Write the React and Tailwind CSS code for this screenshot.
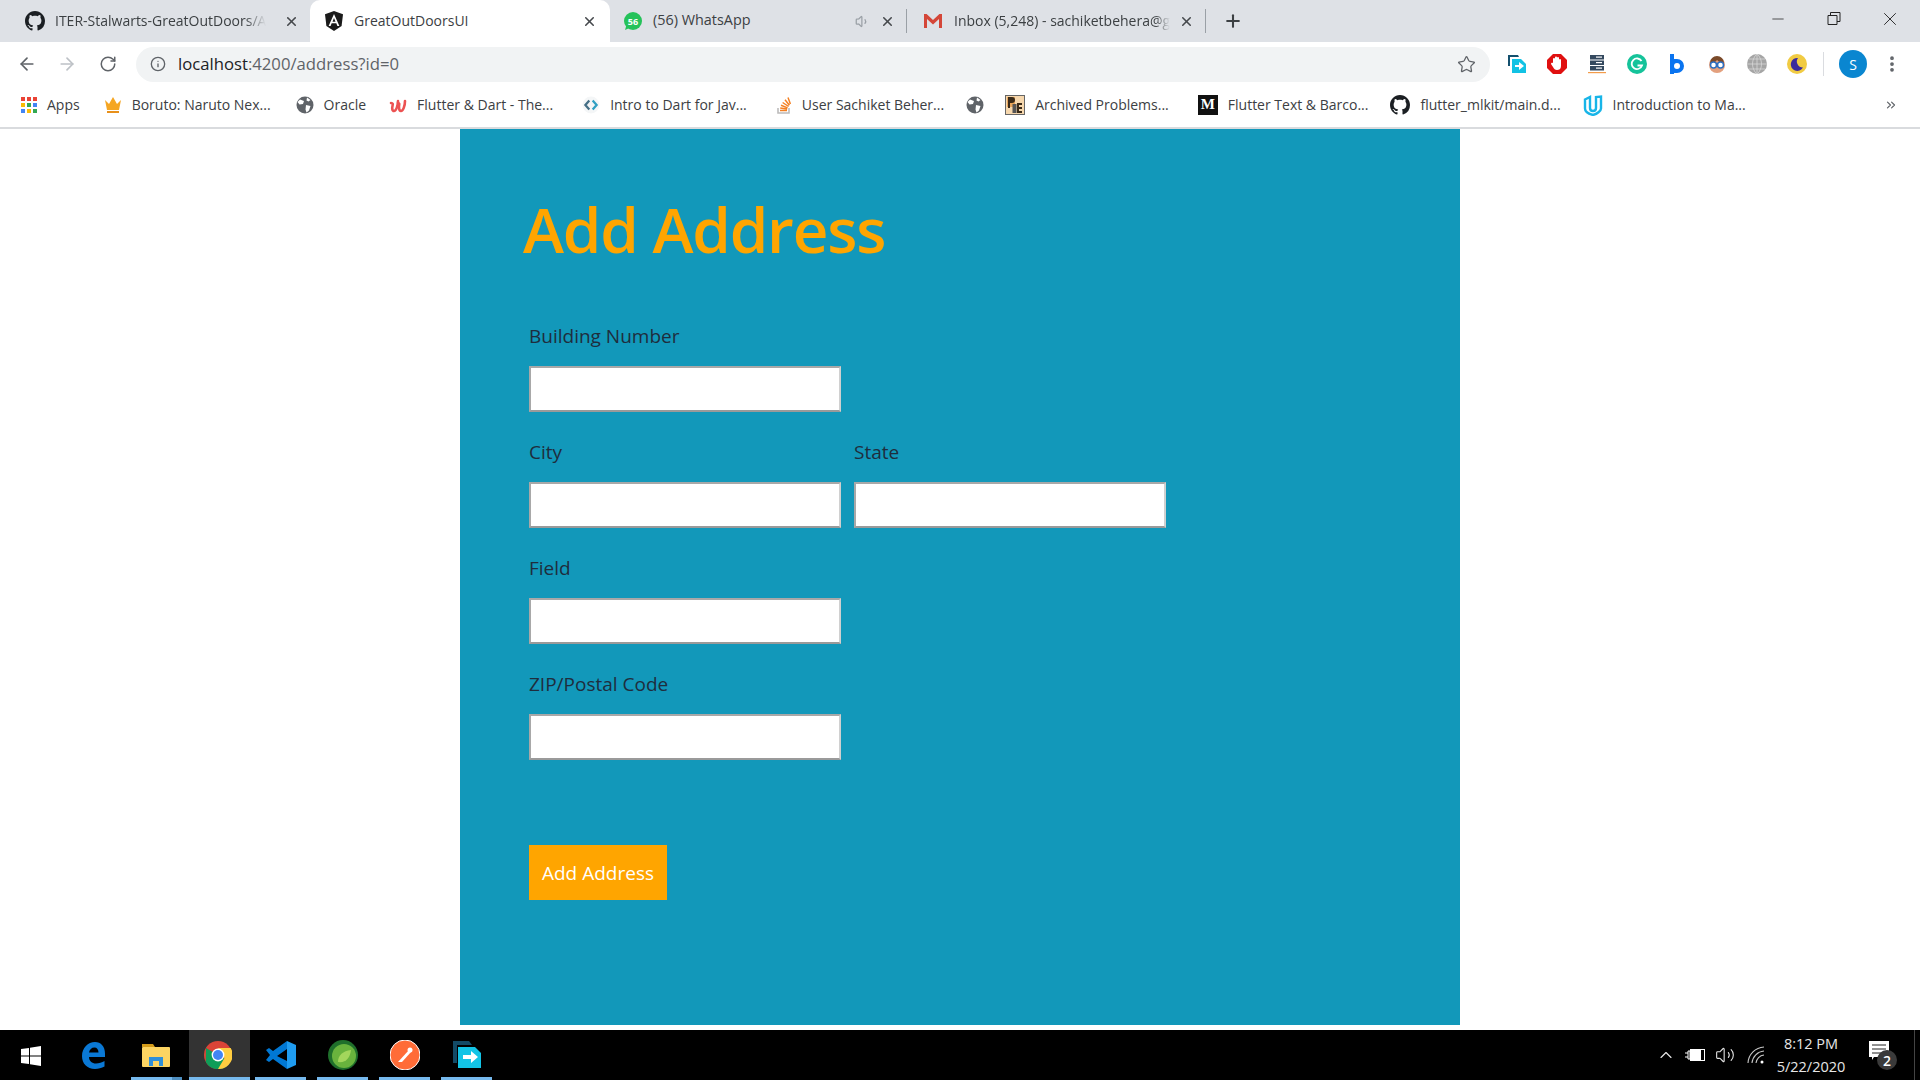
import {
  ArrowLeft,
  ArrowRight,
  RotateCw,
  Info,
  Star,
  Plus,
  X,
  Minus,
  Volume1,
  ChevronUp,
  MoreVertical,
  ChevronsRight,
  Volume2,
} from 'lucide-react'

const uiFont = 'font-["Open_Sans",sans-serif]'

const GithubIcon = ({ size = 20 }) => (
  <svg width={size} height={size} viewBox="0 0 16 16" fill="#1b1f23">
    <path d="M8 0C3.58 0 0 3.58 0 8c0 3.54 2.29 6.53 5.47 7.59.4.07.55-.17.55-.38 0-.19-.01-.82-.01-1.49-2.01.37-2.53-.49-2.69-.94-.09-.23-.48-.94-.82-1.13-.28-.15-.68-.52-.01-.53.63-.01 1.08.58 1.23.82.72 1.21 1.87.87 2.33.66.07-.52.28-.87.51-1.07-1.78-.2-3.64-.89-3.64-3.95 0-.87.31-1.59.82-2.15-.08-.2-.36-1.02.08-2.12 0 0 .67-.21 2.2.82.64-.18 1.32-.27 2-.27s1.36.09 2 .27c1.53-1.04 2.2-.82 2.2-.82.44 1.1.16 1.92.08 2.12.51.56.82 1.27.82 2.15 0 3.07-1.87 3.75-3.65 3.95.29.25.54.73.54 1.48 0 1.07-.01 1.93-.01 2.2 0 .21.15.46.55.38A8.01 8.01 0 0 0 16 8c0-4.42-3.58-8-8-8z" />
  </svg>
)

const AngularIcon = () => (
  <svg width="20" height="20" viewBox="0 0 20 20">
    <path d="M10 0 1 3.2l1.4 11.9L10 20l7.6-4.9L19 3.2z" fill="#1a1a1a" />
    <path d="M10 3 4.6 15h2l1.1-2.7h4.6l1.1 2.7h2zm-1.5 7.7L10 7l1.5 3.7z" fill="#fff" />
  </svg>
)

const WhatsappIcon = () => (
  <svg width="20" height="20" viewBox="0 0 20 20">
    <circle cx="10" cy="10" r="9" fill="#25c25a" />
    <path d="M2 19l1.5-5 3 3z" fill="#25c25a" />
    <text x="10" y="13.5" textAnchor="middle" fontSize="9" fontWeight="700" fill="#fff" fontFamily="Open Sans">56</text>
  </svg>
)

const GmailIcon = () => (
  <svg width="20" height="16" viewBox="0 0 20 16">
    <path d="M1 1h2.6L10 7l6.4-6H19v14h-3V6l-6 5.4L4 6v9H1z" fill="#d44638" />
  </svg>
)

const Bookmark = ({ icon, label, className = '' }) => (
  <div className={`flex items-center gap-[10px] shrink-0 ${className}`}>
    {icon}
    {label ? <span className="whitespace-nowrap">{label}</span> : null}
  </div>
)

const GlobeIcon = ({ color = '#5f6368' }) => (
  <svg width="18" height="18" viewBox="0 0 18 18">
    <circle cx="9" cy="9" r="8.5" fill={color} />
    <path d="M4 3.5 8 5 7 8 3.5 8.5 1.5 6zM10 9l4.5 1-1.5 4.5-2.5 2-1-3zM11 1.5l3.5 2.5-2 1.5-2-1z" fill="#fff" />
  </svg>
)

const AppsIcon = () => {
  const colors = ['#ea4335', '#ea4335', '#ea4335', '#fbbc05', '#34a853', '#4285f4', '#4285f4', '#fbbc05', '#34a853']
  return (
    <div className="grid grid-cols-3 gap-[2px] w-[16px]">
      {colors.map((c, i) => (
        <div key={i} className="w-[4px] h-[4px]" style={{ backgroundColor: c }} />
      ))}
    </div>
  )
}

const CrownIcon = () => (
  <svg width="18" height="18" viewBox="0 0 18 18">
    <path d="M1 4l4 4 4-7 4 7 4-4-2 10H3z" fill="#f5a623" />
    <rect x="3" y="15" width="12" height="2" fill="#e8901a" />
  </svg>
)

const UdemyLikeIcon = () => (
  <svg width="18" height="16" viewBox="0 0 18 16" fill="none" stroke="#ec5252" strokeWidth="2.6" strokeLinecap="round">
    <path d="M2 6c2 0 2 1 1.5 3S3 14 5 14s4-5 4-10" />
    <path d="M9 6c2 0 1 2 1 4s0 4 2 4 4-5 4-10" />
  </svg>
)

const DartIcon = () => (
  <svg width="18" height="18" viewBox="0 0 16 16" fill="none" strokeWidth="2">
    <circle cx="8" cy="8" r="7.5" fill="#f4f6f7" stroke="none" />
    <path d="M6.5 4 3 8l3.5 4" stroke="#456f86" />
    <path d="M9.5 4 13 8l-3.5 4" stroke="#2f9fc2" />
  </svg>
)

const StackIcon = () => (
  <svg width="16" height="20" viewBox="0 0 16 20" fill="none">
    <path d="M2 13v5h11v-5" stroke="#bcbbbb" strokeWidth="1.6" />
    <path d="M4 15.5h7M4.2 13l7 1M5 10.3l6.6 2.6M6.6 7.5l6 4M9 4.8l4.4 5.4M12 2.5l2.4 6.4" stroke="#f48024" strokeWidth="1.5" />
  </svg>
)

const PeIcon = () => (
  <svg width="20" height="20" viewBox="0 0 20 20">
    <rect x=".5" y=".5" width="19" height="19" fill="#f6d7ad" stroke="#666" />
    <rect x="2" y="2" width="8" height="10" fill="#e9a65c" />
    <rect x="7.5" y="9" width="4" height="9" fill="#555" />
    <path d="M3 2h4a3 3 0 0 1 0 6H5v5H3zM12 8h5v2h-3v2h3v2h-3v2h3v2h-5z" fill="#3a2a18" />
  </svg>
)

const MediumIcon = () => (
  <div className="w-[20px] h-[20px] bg-[#111] text-white flex items-center justify-center text-[15px] font-bold font-['Liberation_Serif',serif]">
    M
  </div>
)

const UdacityIcon = () => (
  <svg width="20" height="22" viewBox="0 0 20 22" fill="none" stroke="#18b5e8" strokeWidth="2.4">
    <path d="M2 5.5 7 3v11c0 2 1.5 3 3 3s3-1 3-3V3l5-.5v12c0 2.5-4 5.5-8 6.5-4-1-8-3.5-8-6.5z" />
  </svg>
)

const ExtensionIcons = () => (
  <div className="flex items-center">
    <svg className="w-[20px] h-[20px] mr-[20px]" viewBox="0 0 20 20">
      <path d="M1 1h10l1 2H3v9H1z" fill="#14506e" />
      <path d="M5 5h9l5 5v9H5z" fill="#12c2e4" />
      <path d="M8 11h4V8l5 4-5 4v-3H8z" fill="#fff" />
    </svg>
    <svg className="w-[20px] h-[20px] mr-[20px]" viewBox="0 0 20 20">
      <path d="M6 0h8l6 6v8l-6 6H6l-6-6V6z" fill="#e01010" />
      <path d="M6 9V5a1 1 0 0 1 2 0V3.5a1 1 0 0 1 2 0V4a1 1 0 0 1 2 0v2a1 1 0 0 1 2 0v6c0 3-2 4-4 4s-3-1-4-3L4 10c0-1 1-1.500 2-1z" fill="#fff" />
    </svg>
    <svg className="w-[20px] h-[20px] mr-[20px]" viewBox="0 0 20 20">
      <rect x="3" y="1" width="14" height="4.500" fill="#34495e" />
      <rect x="3" y="6.500" width="14" height="4.500" fill="#34495e" />
      <rect x="3" y="12" width="14" height="4.500" fill="#34495e" />
      <rect x="9" y="2.500" width="6" height="1.200" fill="#fff" />
      <rect x="9" y="8" width="6" height="1.200" fill="#fff" />
      <rect x="9" y="13.500" width="6" height="1.200" fill="#fff" />
      <rect x="1" y="18" width="18" height="1.200" fill="#f39c4a" />
    </svg>
    <svg className="w-[20px] h-[20px] mr-[20px]" viewBox="0 0 20 20">
      <circle cx="10" cy="10" r="10" fill="#15c39a" />
      <path d="M14.500 7A5.300 5.300 0 1 0 15 11.500h-4.500" fill="none" stroke="#fff" strokeWidth="1.800" />
    </svg>
    <svg className="w-[20px] h-[20px] mr-[20px]" viewBox="0 0 20 20">
      <path d="M3 0h4v5h3a7 7 0 0 1 0 14H7v1H3z" fill="#0a74f0" />
      <circle cx="10" cy="12" r="3" fill="#fff" />
    </svg>
    <svg className="w-[20px] h-[20px] mr-[20px]" viewBox="0 0 20 20">
      <circle cx="10" cy="11" r="8" fill="#e3a07e" />
      <path d="M3 9a7 7 0 0 1 14 0c-3 0-5-1-7-3-1 2-4 3-7 3z" fill="#7a4a2a" />
      <circle cx="6.500" cy="11" r="3" fill="#fff" stroke="#2d6fc0" strokeWidth="1.500" />
      <circle cx="13.500" cy="11" r="3" fill="#fff" stroke="#2d6fc0" strokeWidth="1.500" />
    </svg>
    <svg className="w-[20px] h-[20px] mr-[20px]" viewBox="0 0 20 20" fill="none">
      <circle cx="10" cy="10" r="10" fill="#a5a5a5" />
      <path d="M0 10h20M10 0v20M2 5h16M2 15h16M10 0c-6 5-6 15 0 20M10 0c6 5 6 15 0 20" stroke="#d8d8d8" strokeWidth=".8" />
    </svg>
    <svg className="w-[20px] h-[20px]" viewBox="0 0 20 20">
      <circle cx="10" cy="10" r="10" fill="#f1cb43" />
      <path d="M11 4a6.500 6.500 0 1 0 5 9.500A6 6 0 0 1 11 4z" fill="#3b2a9c" />
    </svg>
  </div>
)

const Tabs = () => (
  <div className={`h-[42px] bg-[#dee1e6] flex items-center text-[14px] text-[#3c4043] ${uiFont}`}>
    <div className="w-[310px] h-full flex items-center pl-[25px] pr-[11px]">
      <GithubIcon />
      <span className="ml-[10px] pb-[2px] whitespace-nowrap [mask-image:linear-gradient(to_right,black_90%,transparent)]">ITER-Stalwarts-GreatOutDoors/A</span>
      <X size={15} strokeWidth={2.5} className="ml-auto text-[#45484c]" />
    </div>
    <div className="w-[300px] h-full bg-white rounded-t-[10px] flex items-center pl-[14px] pr-[13px]">
      <AngularIcon />
      <span className="ml-[10px] pb-[2px] whitespace-nowrap">GreatOutDoorsUI</span>
      <X size={15} strokeWidth={2.5} className="ml-auto text-[#45484c]" />
    </div>
    <div className="w-[296px] h-full flex items-center pl-[13px] pr-[11px]">
      <WhatsappIcon />
      <span className="ml-[10px] pb-[2px] whitespace-nowrap text-[14.4px]">(56) WhatsApp</span>
      <Volume1 size={15} className="ml-auto text-[#9aa0a6]" />
      <X size={15} strokeWidth={2.5} className="ml-[10px] text-[#45484c]" />
    </div>
    <div className="w-[300px] h-[24px] flex items-center pl-[16px] pr-[11px] border-x border-[#9aa0a6]">
      <GmailIcon />
      <span className="ml-[11px] pb-[2px] whitespace-nowrap [mask-image:linear-gradient(to_right,black_93%,transparent)]">Inbox (5,248) - sachiketbehera@g</span>
      <X size={15} strokeWidth={2.5} className="ml-auto text-[#45484c]" />
    </div>
    <Plus size={20} strokeWidth={2.5} className="ml-[17px] text-[#3c4043]" />
    <div className="ml-auto flex items-center text-[#222] pb-[5px] pr-[2px]">
      <Minus size={18} strokeWidth={1} className="w-[56px]" />
      <svg className="w-[56px] h-[13px]" viewBox="0 0 13 13" fill="none" stroke="#222">
        <path d="M.5 3.500h9v9h-9zM3 3.500V.500h9.500v9H9.500" />
      </svg>
      <X size={22} strokeWidth={1} className="w-[56px]" />
    </div>
  </div>
)

const Toolbar = () => (
  <div className="h-[42px] bg-white flex items-center pt-[2px]">
    <div className="w-[136px] flex items-center pl-[17px] text-[#5f6368]">
      <ArrowLeft size={20} strokeWidth={2} />
      <ArrowRight size={20} strokeWidth={2} className="ml-[20px] text-[#bdc1c6]" />
      <RotateCw size={18} strokeWidth={2} className="ml-[22px]" />
    </div>
    <div className={`w-[1354px] h-[35px] rounded-full bg-[#f1f3f4] flex items-center pl-[14px] pr-[14px] text-[16.7px] ${uiFont}`}>
      <Info size={16} strokeWidth={2} className="text-[#5f6368]" />
      <span className="ml-[12px] text-[#202124]">localhost<span className="text-[#5f6368]">:4200/address?id=0</span></span>
      <Star size={19} strokeWidth={1.6} className="ml-auto text-[#5f6368]" />
    </div>
    <div className="ml-[17px] flex items-center">
      <ExtensionIcons />
      <div className="w-px h-[24px] bg-[#dadce0] ml-[16px]" />
      <div className={`ml-[15px] w-[28px] h-[28px] rounded-full bg-[#0a86d0] text-white flex items-center justify-center text-[14px] ${uiFont}`}>S</div>
      <MoreVertical size={20} strokeWidth={2.5} className="ml-[15px] text-[#5f6368]" />
    </div>
  </div>
)

const Bookmarks = () => (
  <div className={`h-[45px] bg-white border-b-2 border-[#d9dbde] flex items-center pl-[20px] pr-[22px] pb-[2px] gap-[22px] text-[14px] text-[#3c4043] ${uiFont}`}>
    <Bookmark icon={<AppsIcon />} label="Apps" className="ml-[1px]" />
    <Bookmark icon={<CrownIcon />} label="Boruto: Naruto Nex..." className="ml-[2px]" />
    <Bookmark icon={<GlobeIcon />} label="Oracle" className="ml-[3px]" />
    <Bookmark icon={<UdemyLikeIcon />} label="Flutter & Dart - The..." className="ml-[1px]" />
    <Bookmark icon={<DartIcon />} label="Intro to Dart for Jav..." className="ml-[7px]" />
    <Bookmark icon={<StackIcon />} label="User Sachiket Beher..." className="ml-[7px]" />
    <Bookmark icon={<GlobeIcon />} />
    <Bookmark icon={<PeIcon />} label="Archived Problems..." className="-ml-[1px]" />
    <Bookmark icon={<MediumIcon />} label="Flutter Text & Barco..." className="ml-[7px]" />
    <Bookmark icon={<GithubIcon />} label="flutter_mlkit/main.d..." />
    <Bookmark icon={<UdacityIcon />} label="Introduction to Ma..." />
    <ChevronsRight size={14} className="ml-auto text-[#5f6368]" />
  </div>
)

const FormField = ({ label }) => (
  <div className="w-[312px]">
    <label className="block h-[30px] leading-[30px] text-[19px] text-[#1f2d3d]">{label}</label>
    <input type="text" className="mt-[15px] block w-full h-[46px] bg-white border-2 border-t-[#a8a8a8] border-l-[#a8a8a8] border-r-[#d0d0d0] border-b-[#9a9a9a]" />
  </div>
)

const AddressForm = () => (
  <div className="w-[1000px] h-[896px] mx-auto bg-[#1298ba] pt-[60px] pl-[69px]">
    <h1 className="-ml-[6px] h-[80px] leading-[80px] text-[62px] tracking-[-1.2px] font-semibold text-[#ffa500]">Add Address</h1>
    <form className="mt-[52px] flex flex-col gap-[25px]">
      <FormField label="Building Number" />
      <div className="flex gap-[13px]">
        <FormField label="City" />
        <FormField label="State" />
      </div>
      <FormField label="Field" />
      <FormField label="ZIP/Postal Code" />
      <button type="button" className="mt-[60px] w-[138px] h-[55px] pt-[1px] bg-[#ffa500] text-white text-[19px]">Add Address</button>
    </form>
  </div>
)

const Taskbar = () => (
  <div className={`h-[50px] bg-black flex items-stretch text-[#e6e6e6] ${uiFont}`}>
    <div className="w-[61px] flex items-center justify-center pt-[1px]">
      <svg width="20" height="20" viewBox="0 0 20 20" fill="#fff">
        <path d="M0 3l8-1v7.500H0zM9 1.800 20 0v9.500H9zM0 10.500h8V18l-8-1zM9 10.500h11V20L9 18.200z" />
      </svg>
    </div>
    <div className="w-[62px] flex items-center justify-center pl-[4px]">
      <svg width="26" height="28" viewBox="0 0 26 28">
        <path d="M24 16H8c0 4 3 6.500 7 6.500 3 0 6-1 8.500-2.500v5.500c-3 1.500-6 2.500-9.500 2.500C6 28 1 22.500 1 15 1 7 7 1 14 1c6 0 10 4.500 10 11.500zM17.500 11.500c0-3-1.500-5-4-5-3 0-5 2-5.500 5z" fill="#0a78d4" />
      </svg>
    </div>
    <div className="w-[66px] flex items-center justify-center relative">
      <svg width="28" height="24" viewBox="0 0 28 24">
        <path d="M0 1h11l2 3H0z" fill="#d49c1a" />
        <rect y="4" width="28" height="20" rx="1" fill="#fcd462" />
        <path d="M7 23v-9h14v9h-4v-5h-6v5z" fill="#2f8fd8" />
      </svg>
      <div className="absolute left-[8px] w-[41px] bottom-0 h-[3px] bg-[#76b9ed]" />
      <div className="absolute left-[49px] w-[10px] bottom-0 h-[3px] bg-[#4f8fc0]" />
    </div>
    <div className="w-[61px] bg-[#333] flex items-center justify-center relative pr-[3px]">
      <svg width="28" height="28" viewBox="0 0 28 28">
        <circle cx="14" cy="14" r="14" fill="#db4437" />
        <path d="M14 14 26.200 21a14 14 0 0 1-24.400 0L2 7z" fill="#0f9d58" />
        <path d="M14 7h12.700A14 14 0 0 1 14 28l6.500-11z" fill="#ffcd40" />
        <circle cx="14" cy="14" r="6.400" fill="#fff" />
        <circle cx="14" cy="14" r="5" fill="#4285f4" />
      </svg>
      <div className="absolute left-0 right-0 bottom-0 h-[3px] bg-[#76b9ed]" />
    </div>
    <div className="w-[62px] flex items-center justify-center relative">
      <svg width="30" height="30" viewBox="0 0 30 30">
        <path d="M21 1 30 5v20l-9 4z" fill="#1f9cf0" />
        <path d="M21 1v8l-10 7 10 5v8L7 19 3 22l-3-2 4-5-4-5 3-2 4 3z" fill="#0078d4" />
      </svg>
      <div className="absolute left-[5px] right-[6px] bottom-0 h-[3px] bg-[#76b9ed]" />
    </div>
    <div className="w-[62px] flex items-center justify-center relative">
      <svg width="30" height="30" viewBox="0 0 30 30">
        <circle cx="15" cy="15" r="15" fill="#1f6f2b" />
        <circle cx="16" cy="16" r="12" fill="#69b33d" />
        <path d="M10 22c0-7 5-11 13-12-1 8-5 13-13 12z" fill="#a3d65c" />
      </svg>
      <div className="absolute left-[5px] right-[6px] bottom-0 h-[3px] bg-[#76b9ed]" />
    </div>
    <div className="w-[62px] flex items-center justify-center relative">
      <svg width="30" height="30" viewBox="0 0 30 30">
        <circle cx="15" cy="15" r="15" fill="#ff6c37" stroke="#fff" strokeWidth="1" />
        <path d="M8 22 19 10l2 2-9 10z" fill="#fff" />
        <circle cx="20" cy="10" r="2.500" fill="#fff" />
      </svg>
      <div className="absolute left-[5px] right-[6px] bottom-0 h-[3px] bg-[#76b9ed]" />
    </div>
    <div className="w-[62px] flex items-center justify-center relative">
      <svg width="30" height="30" viewBox="0 0 30 30">
        <path d="M1 1h16l3 4H5v18H1z" fill="#134a66" />
        <path d="M6 7h17l6 6v15H6z" fill="#13c4e6" />
        <path d="M11 15h8v-4l7 6-7 6v-4h-8z" fill="#fff" />
      </svg>
      <div className="absolute left-[5px] right-[6px] bottom-0 h-[3px] bg-[#76b9ed]" />
    </div>
    <div className="ml-auto flex items-center pr-[5px]">
      <ChevronUp size={20} strokeWidth={1.4} />
      <svg className="ml-[9px]" width="20" height="14" viewBox="0 0 20 14">
        <path d="M0 5h3M0 9h3M3 3h2v8H3z" stroke="#fff" fill="none" />
        <rect x="5.500" y="1.500" width="14" height="11" stroke="#fff" fill="none" />
        <rect x="6" y="2" width="10" height="10" fill="#fff" />
      </svg>
      <Volume2 size={20} strokeWidth={1.3} className="ml-[10px]" />
      <svg className="ml-[12px]" width="20" height="20" viewBox="0 0 20 20" fill="none" stroke="#c8c8c8" strokeWidth="1.100">
        <path d="M1 18A17 17 0 0 1 17 2M5 18A13 13 0 0 1 17 6M9 18a9 9 0 0 1 8-8" />
        <circle cx="15" cy="17" r="1.500" fill="#fff" stroke="none" />
      </svg>
      <div className="ml-[4px] w-[80px] text-center text-[14.5px] leading-[23px]">
        <div>8:12 PM</div>
        <div>5/22/2020</div>
      </div>
      <div className="ml-[18px] w-[34px] h-[36px] relative">
        <svg width="20" height="20" viewBox="0 0 20 20" fill="#fff" className="absolute left-0 top-[4px]">
          <path d="M0 0h20v16H5l-2 3v-3H0z" />
          <path d="M3 4h14M3 8h14M3 12h14" stroke="#222" />
        </svg>
        <div className="absolute left-[8px] top-[13px] w-[20px] h-[20px] rounded-full bg-[#3a3a3a] text-white text-[14px] font-semibold flex items-center justify-center">2</div>
      </div>
      <div className="ml-[11px] w-px h-full bg-[#444]" />
    </div>
  </div>
)

const App = () => (
  <div className={`w-[1920px] h-[1080px] flex flex-col overflow-hidden bg-white ${uiFont}`}>
    <Tabs />
    <Toolbar />
    <Bookmarks />
    <div className="h-[901px]">
      <AddressForm />
    </div>
    <Taskbar />
  </div>
)

export default App
